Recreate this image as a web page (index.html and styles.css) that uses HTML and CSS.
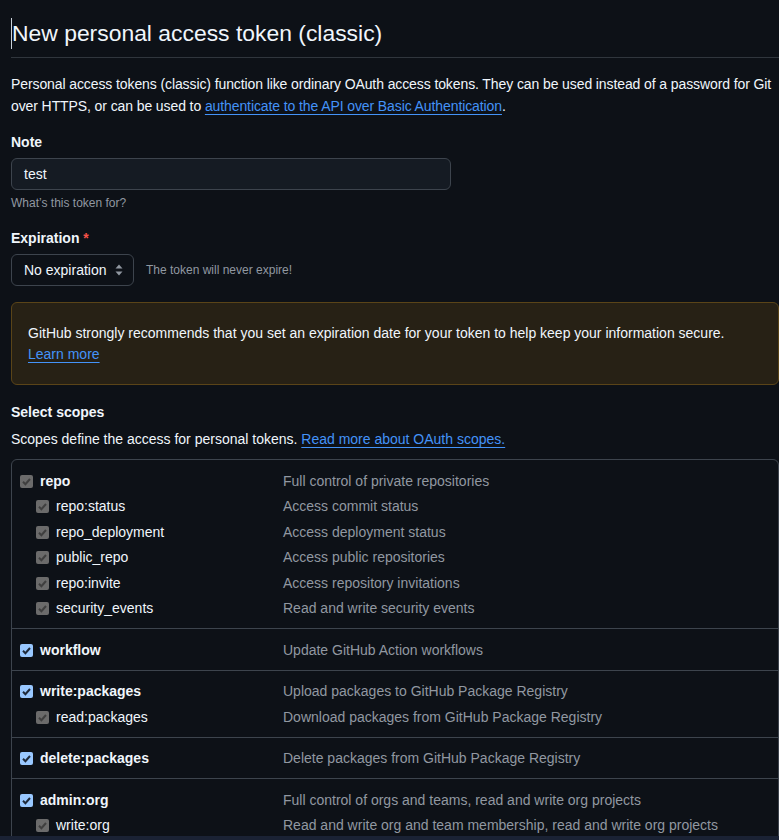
FILE: index.html
```html
<!DOCTYPE html>
<html lang="en">
<head>
<meta charset="utf-8">
<title>New personal access token (classic)</title>
<link rel="stylesheet" href="styles.css">
</head>
<body>
<main class="page">
  <h1 class="title"><span class="caret"></span>New personal access token (classic)</h1>
  <p class="intro">Personal access tokens (classic) function like ordinary OAuth access tokens. They can be used instead of a password for Git over HTTPS, or can be used to <a href="#" class="link">authenticate to the API over Basic Authentication</a>.</p>

  <div class="field">
    <label class="label">Note</label>
    <div class="input">test</div>
    <div class="hint">What’s this token for?</div>
  </div>

  <div class="field">
    <label class="label">Expiration <span class="req">*</span></label>
    <div class="select-row">
      <div class="select">No expiration
        <svg class="arrows" width="8" height="12" viewBox="0 0 8 12"><path d="M4 0.5 L7.5 4.5 H0.5 Z M4 11.5 L7.5 7.5 H0.5 Z" fill="#9198a1"/></svg>
      </div>
      <span class="select-note">The token will never expire!</span>
    </div>
  </div>

  <div class="warning">
    GitHub strongly recommends that you set an expiration date for your token to help keep your information secure.<br>
    <a href="#" class="link">Learn more</a>
  </div>

  <h3 class="label scopes-title">Select scopes</h3>
  <p class="scopes-desc">Scopes define the access for personal tokens. <a href="#" class="link">Read more about OAuth scopes.</a></p>

  <div class="scopes">
    <div class="group">
      <div class="row"><span class="name top"><span class="cb gray"><svg viewBox="0 0 13 13"><path d="M3 6.8 L5.4 9.2 L10 4" /></svg></span>repo</span><span class="desc">Full control of private repositories</span></div>
      <div class="row"><span class="name sub"><span class="cb gray"><svg viewBox="0 0 13 13"><path d="M3 6.8 L5.4 9.2 L10 4" /></svg></span>repo:status</span><span class="desc">Access commit status</span></div>
      <div class="row"><span class="name sub"><span class="cb gray"><svg viewBox="0 0 13 13"><path d="M3 6.8 L5.4 9.2 L10 4" /></svg></span>repo_deployment</span><span class="desc">Access deployment status</span></div>
      <div class="row"><span class="name sub"><span class="cb gray"><svg viewBox="0 0 13 13"><path d="M3 6.8 L5.4 9.2 L10 4" /></svg></span>public_repo</span><span class="desc">Access public repositories</span></div>
      <div class="row"><span class="name sub"><span class="cb gray"><svg viewBox="0 0 13 13"><path d="M3 6.8 L5.4 9.2 L10 4" /></svg></span>repo:invite</span><span class="desc">Access repository invitations</span></div>
      <div class="row"><span class="name sub"><span class="cb gray"><svg viewBox="0 0 13 13"><path d="M3 6.8 L5.4 9.2 L10 4" /></svg></span>security_events</span><span class="desc">Read and write security events</span></div>
    </div>
    <div class="group">
      <div class="row"><span class="name top"><span class="cb blue"><svg viewBox="0 0 13 13"><path d="M3 6.8 L5.4 9.2 L10 4" /></svg></span>workflow</span><span class="desc">Update GitHub Action workflows</span></div>
    </div>
    <div class="group">
      <div class="row"><span class="name top"><span class="cb blue"><svg viewBox="0 0 13 13"><path d="M3 6.8 L5.4 9.2 L10 4" /></svg></span>write:packages</span><span class="desc">Upload packages to GitHub Package Registry</span></div>
      <div class="row"><span class="name sub"><span class="cb gray"><svg viewBox="0 0 13 13"><path d="M3 6.8 L5.4 9.2 L10 4" /></svg></span>read:packages</span><span class="desc">Download packages from GitHub Package Registry</span></div>
    </div>
    <div class="group">
      <div class="row"><span class="name top"><span class="cb blue"><svg viewBox="0 0 13 13"><path d="M3 6.8 L5.4 9.2 L10 4" /></svg></span>delete:packages</span><span class="desc">Delete packages from GitHub Package Registry</span></div>
    </div>
    <div class="group">
      <div class="row"><span class="name top"><span class="cb blue"><svg viewBox="0 0 13 13"><path d="M3 6.8 L5.4 9.2 L10 4" /></svg></span>admin:org</span><span class="desc">Full control of orgs and teams, read and write org projects</span></div>
      <div class="row"><span class="name sub"><span class="cb gray"><svg viewBox="0 0 13 13"><path d="M3 6.8 L5.4 9.2 L10 4" /></svg></span>write:org</span><span class="desc">Read and write org and team membership, read and write org projects</span></div>
    </div>
  </div>
</main>
<div class="bottom-strip"></div>
</body>
</html>
```

FILE: styles.css
```css
* { box-sizing: border-box; }
html, body {
  margin: 0;
  padding: 0;
  background: #0d1117;
  overflow: hidden;
}
body {
  color: #f0f6fc;
  font-family: "Liberation Sans", Arial, sans-serif;
  font-size: 14px;
  line-height: 21px;
  height: 840px;
}
.page {
  padding: 15px 0 0 11px;
  width: 779px;
}
.title {
  margin: 0;
  font-size: 22.9px;
  font-weight: 400;
  line-height: 36px;
  padding-bottom: 6px;
  border-bottom: 1px solid #30363d;
}
.caret {
  display: inline-block;
  width: 1px;
  height: 31px;
  background: #c9d1d9;
  vertical-align: -8px;
}
.intro {
  margin: 15px 0 0;
  line-height: 22px;
  letter-spacing: -0.1px;
}
.link {
  color: #4493f8;
  text-decoration: underline;
  text-underline-offset: 3px;
}
.field { margin-top: 14px; }
.field + .field { margin-top: 15px; }
.label {
  display: block;
  font-weight: 700;
  font-size: 14px;
  line-height: 21px;
  padding-top: 1px;
  margin: 0 0 5px;
}
.req { color: #f85149; }
.input {
  width: 440px;
  height: 32px;
  background: #151b23;
  border: 1px solid #3d444d;
  border-radius: 6px;
  padding: 0 12px;
  line-height: 30px;
}
.hint {
  margin-top: 4px;
  font-size: 12px;
  line-height: 18px;
  color: #9198a1;
}
.select-row {
  display: flex;
  align-items: center;
  gap: 12px;
}
.select {
  display: flex;
  align-items: center;
  justify-content: space-between;
  width: 123px;
  height: 32px;
  border: 1px solid #3d444d;
  border-radius: 6px;
  padding: 0 10px 0 12px;
}
.arrows { display: block; }
.select-note {
  font-size: 12px;
  color: #9198a1;
}
.warning {
  margin-top: 16px;
  width: 768px;
  background: #272115;
  border: 1px solid #5a4418;
  border-radius: 6px;
  padding: 20px 16px 19px;
  line-height: 21px;
}
.scopes-title { margin: 16px 0 6px; }
.scopes-desc { margin: 0; }
.scopes {
  margin-top: 9px;
  width: 768px;
  border: 1px solid #3d444d;
  border-radius: 6px;
}
.group {
  padding: 8.5px 8px 6.5px;
  border-top: 1px solid #3d444d;
}
.group:first-child { border-top: 0; }
.row {
  display: flex;
  align-items: center;
  height: 25.5px;
}
.name {
  display: flex;
  align-items: center;
  width: 263px;
  flex: none;
}
.name.top { font-weight: 700; }
.name.sub { padding-left: 16px; }
.desc { color: #9198a1; }
.cb {
  width: 13px;
  height: 13px;
  border-radius: 2px;
  margin-right: 7px;
  flex: none;
  display: flex;
}
.cb svg {
  width: 13px;
  height: 13px;
  fill: none;
  stroke-width: 2;
}
.cb.gray { background: #6b6b6b; }
.cb.gray svg { stroke: #3f3f3f; }
.cb.blue { background: #99c8ff; }
.cb.blue svg { stroke: #1f2a3a; }
.bottom-strip {
  position: fixed;
  left: 0;
  right: 0;
  bottom: 0;
  height: 4px;
  background: #1a2234;
}
```
